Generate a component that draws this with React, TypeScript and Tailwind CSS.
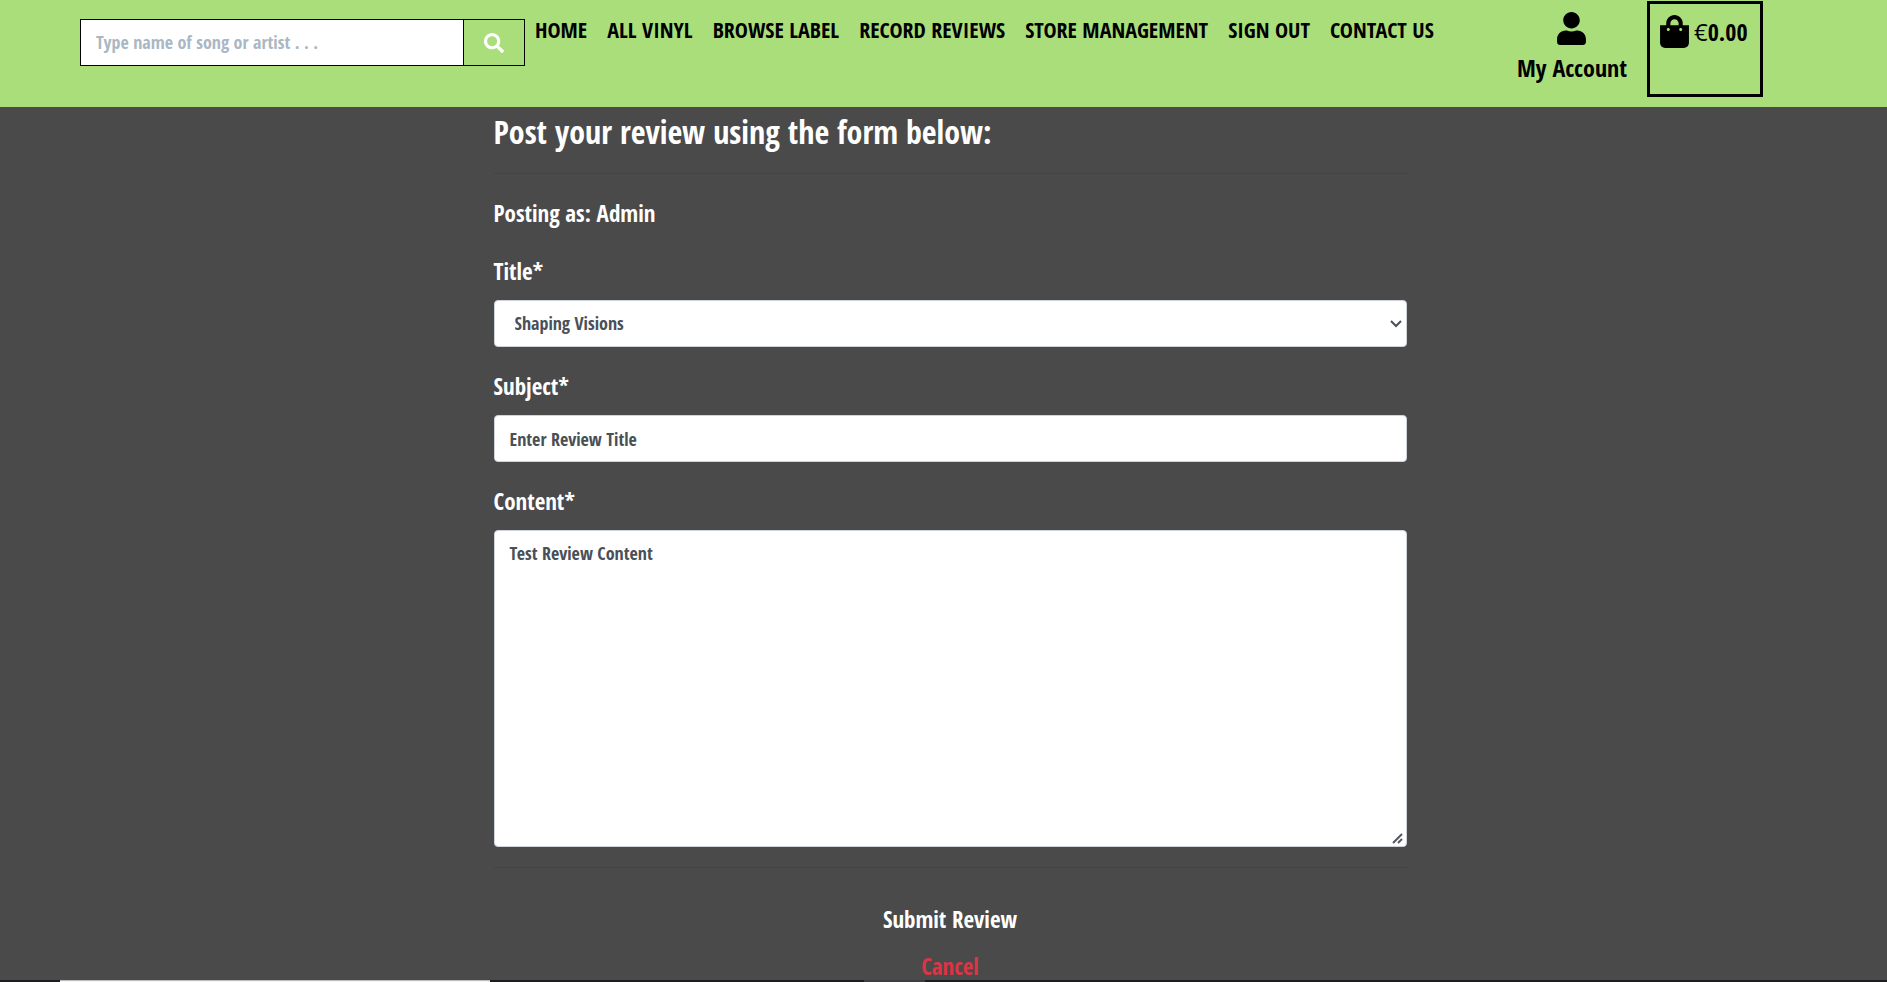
import type { ReactNode } from "react";
import { FaSearch, FaShoppingBag, FaUser } from "react-icons/fa";

const links = [
  "HOME",
  "ALL VINYL",
  "BROWSE LABEL",
  "RECORD REVIEWS",
  "STORE MANAGEMENT",
  "SIGN OUT",
  "CONTACT US",
];

const control =
  "block w-full rounded border border-[#ced4da] bg-white text-[18px] font-bold text-[#495057]";

function Field({ id, label, children }: { id: string; label: string; children: ReactNode }) {
  return (
    <div className="mb-[14px]">
      <label htmlFor={id} className="mb-3 block pt-2 text-[23px] leading-[34px]">
        {label}
      </label>
      <div className="relative">{children}</div>
    </div>
  );
}

function Header() {
  return (
    <header className="flex h-[107px] items-start bg-[#aade7a] pl-20 pr-[124px] text-black">
      <form className="mt-[19px] flex h-[47px] w-[445px] shrink-0 border border-black" onSubmit={(e) => e.preventDefault()}>
        <input
          type="search"
          aria-label="Search"
          placeholder="Type name of song or artist . . ."
          className="min-w-0 flex-1 bg-white px-[15px] text-[18px] font-bold placeholder:text-[#aab7c4] placeholder:opacity-100"
        />
        <button type="submit" aria-label="Search" className="flex w-[61px] items-center justify-center border-l border-black text-white">
          <FaSearch size={20} />
        </button>
      </form>
      <nav className="ml-[10px] mt-[13px] flex gap-5 whitespace-nowrap text-[22px] leading-8">
        {links.map((link) => (
          <a key={link} href="#">
            {link}
          </a>
        ))}
      </nav>
      <div className="ml-auto flex shrink-0 gap-5">
        <a href="#" className="flex flex-col items-center gap-[7px] pt-3 text-[24px] leading-8">
          <FaUser size={33} />
          My Account
        </a>
        <a href="#" className="mt-px flex h-24 w-[116px] items-start gap-1 border-[3px] border-black pl-[9px] pt-[11px] text-[24px] leading-[34px]">
          <FaShoppingBag size={33} className="-mx-px shrink-0" />
          <span>
            <span className="font-['Open_Sans',sans-serif] font-normal">€</span>0.00
          </span>
        </a>
      </div>
    </header>
  );
}

export default function App() {
  return (
    <div className="flex min-h-screen flex-col bg-[#4a4a4a] font-['Open_Sans_Condensed','Roboto_Condensed','Open_Sans',sans-serif] font-bold text-white">
      <Header />
      <main className="flex-1 pl-[13px]">
        <div className="mx-auto w-1/2 px-3">
          <h1 className="pt-1 text-[32px] leading-[42px]">Post your review using the form below:</h1>
          <hr className="mt-5 border-[#434343]" />
          <p className="mb-4 mt-[22px] text-[23px] leading-[34px]">Posting as: Admin</p>
          <form onSubmit={(e) => e.preventDefault()}>
            <Field id="title" label="Title*">
              <select id="title" className={`${control} h-[47px] appearance-none px-5`}>
                <option>Shaping Visions</option>
              </select>
              <svg
                aria-hidden="true"
                viewBox="0 0 12 8"
                className="pointer-events-none absolute right-[5px] top-5 h-2 w-3 fill-none stroke-[#495057] stroke-2"
              >
                <path d="M1 1l5 5 5-5" />
              </svg>
            </Field>
            <Field id="subject" label="Subject*">
              <input id="subject" type="text" defaultValue="Enter Review Title" className={`${control} h-[47px] px-[15px]`} />
            </Field>
            <Field id="content" label="Content*">
              <textarea id="content" rows={11} defaultValue="Test Review Content" className={`${control} h-[317px] px-[15px] py-2 leading-7`} />
              <svg
                aria-hidden="true"
                viewBox="0 0 13 13"
                className="pointer-events-none absolute bottom-px right-0.5 size-[13px] bg-white fill-none stroke-[#55585c] stroke-2"
              >
                <path d="M1 10l9-9M6 10l4-4" />
              </svg>
            </Field>
            <hr className="mt-5 border-[#434343]" />
            <div className="mt-[30px] flex flex-col items-center text-[23px]">
              <button type="submit" className="pt-1 leading-[34px]">Submit Review</button>
              <a href="#" className="mt-[18px] leading-6 text-[#dc3545]">
                Cancel
              </a>
            </div>
          </form>
        </div>
      </main>
      <footer className="flex h-[2px] bg-[#1d1d1f] pl-[60px]">
        <div className="w-[430px] border-t border-[#bdbdbd] bg-[#f3f3f3]" />
        <div className="ml-[374px] w-[61px] bg-[#3d3d3f]" />
      </footer>
    </div>
  );
}
